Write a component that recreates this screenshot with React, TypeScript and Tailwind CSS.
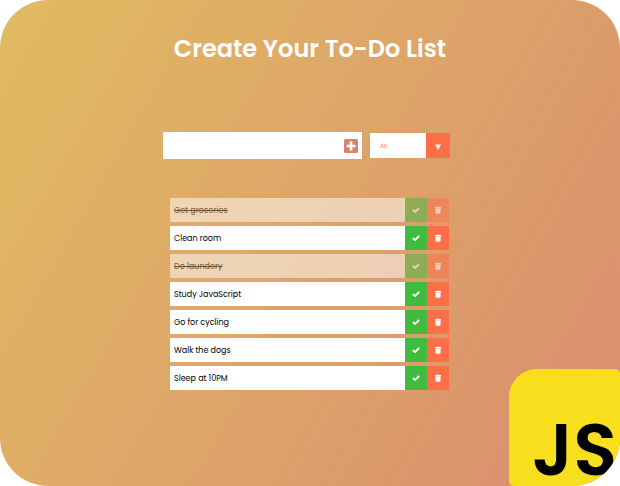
import { useState } from "react";

type Todo = { id: number; text: string; done: boolean };

const initialTodos: Todo[] = [
  { id: 1, text: "Get groceries", done: true },
  { id: 2, text: "Clean room", done: false },
  { id: 3, text: "Do laundery", done: true },
  { id: 4, text: "Study JavaScript", done: false },
  { id: 5, text: "Go for cycling", done: false },
  { id: 6, text: "Walk the dogs", done: false },
  { id: 7, text: "Sleep at 10PM", done: false },
];

function PlusSquare() {
  return (
    <svg viewBox="0 0 14 14" className="size-[14px]" aria-hidden="true">
      <rect width="14" height="14" rx="1.5" fill="#d8836c" />
      <path d="M5.7 2.6h2.6v3.1h3.1v2.6H8.3v3.1H5.7V8.3H2.6V5.7h3.1z" fill="#fff" />
    </svg>
  );
}

function Check() {
  return (
    <svg viewBox="0 0 8 8" className="h-2 w-2" aria-hidden="true">
      <path d="M.8 4 3 6 7.2 2" fill="none" stroke="#fff" strokeWidth="1.8" />
    </svg>
  );
}

function Trash() {
  return (
    <svg viewBox="0 0 8 8" className="h-2 w-2" aria-hidden="true">
      <path d="M1 .9h1.9L3.3.4h1.4l.4.5H7v1H1zM1.3 2.2h5.4l-.3 5a.7.7 0 0 1-.7.6H2.3a.7.7 0 0 1-.7-.6z" fill="#fff" />
    </svg>
  );
}

export default function App() {
  const [todos, setTodos] = useState(initialTodos);
  const [text, setText] = useState("");
  const [filter, setFilter] = useState("all");

  const shown = todos.filter(
    (t) => filter === "all" || (filter === "completed") === t.done,
  );

  return (
    <main className="relative flex min-h-screen flex-col items-center rounded-[48px] bg-[linear-gradient(120deg,#e0bb5f,#dea868_42%,#d98d6e)] pb-24 font-['Poppins','Inter',sans-serif]">
      <h1 className="mt-8 text-[24px] leading-[34px] font-semibold text-white">
        Create Your To-Do List
      </h1>

      <form
        className="mt-[66px] mr-[7px] flex w-[287px] items-center gap-2"
        onSubmit={(e) => {
          e.preventDefault();
          if (!text.trim()) return;
          setTodos([...todos, { id: Date.now(), text, done: false }]);
          setText("");
        }}
      >
        <div className="flex h-[27px] min-w-0 flex-1 items-center bg-white pr-1">
          <input
            aria-label="New task"
            value={text}
            onChange={(e) => setText(e.target.value)}
            className="h-full min-w-0 flex-1 px-2 text-xs outline-none"
          />
          <button type="submit" aria-label="Add task">
            <PlusSquare />
          </button>
        </div>
        <div className="grid h-[25px] w-[80px] grid-cols-[56px_24px] bg-white">
          <select
            aria-label="Filter tasks"
            value={filter}
            onChange={(e) => setFilter(e.target.value)}
            className="col-span-2 col-start-1 row-start-1 appearance-none pt-[2px] pl-[10px] text-[6px] text-[#ff6f47] outline-none"
          >
            <option value="all">All</option>
            <option value="completed">Completed</option>
            <option value="uncompleted">Uncompleted</option>
          </select>
          <span className="pointer-events-none col-start-2 row-start-1 flex items-center justify-center bg-[#ff6f47] pt-[2px]">
            <svg viewBox="0 0 6 6" className="size-[6px]" aria-hidden="true">
              <path d="M0 .5h6L3 6z" fill="#fff" />
            </svg>
          </span>
        </div>
      </form>

      <ul className="mt-[39px] mr-px flex w-[279px] flex-col gap-1">
        {shown.map((todo) => (
          <li
            key={todo.id}
            className={`flex h-6 bg-white text-[8px] text-black ${todo.done ? "opacity-50" : ""}`}
          >
            <span className={`flex-1 pl-1 leading-[26px] ${todo.done ? "line-through" : ""}`}>
              {todo.text}
            </span>
            <button
              type="button"
              aria-label={`Complete ${todo.text}`}
              className="flex w-[22px] items-center justify-center bg-[#40bb40]"
              onClick={() =>
                setTodos(todos.map((t) => (t.id === todo.id ? { ...t, done: !t.done } : t)))
              }
            >
              <Check />
            </button>
            <button
              type="button"
              aria-label={`Delete ${todo.text}`}
              className="flex w-[22px] items-center justify-center bg-[#ff6f47]"
              onClick={() => setTodos(todos.filter((t) => t.id !== todo.id))}
            >
              <Trash />
            </button>
          </li>
        ))}
      </ul>

      <div className="absolute right-0 bottom-0 flex h-[117px] w-[111px] items-end justify-end overflow-hidden rounded-[5px] rounded-tl-[28px] rounded-br-[48px] bg-[#f7df1e] pr-[3px] font-['Poppins',sans-serif] text-[72px] leading-[72px] font-semibold text-black">
        JS
      </div>
    </main>
  );
}
